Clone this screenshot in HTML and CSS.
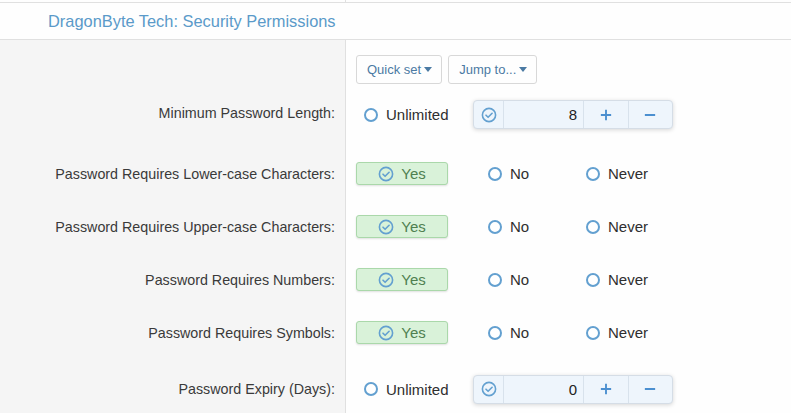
FILE: index.html
```html
<!DOCTYPE html>
<html lang="en">
<head>
    <meta charset="UTF-8">
    <meta name="viewport" content="width=device-width, initial-scale=1.0">
    <title>Security Permissions</title>
    <link rel="stylesheet" href="styles.css">
</head>
<body>
    <div class="top-strip">
        <div class="strip-left"></div>
        <div class="strip-right"></div>
    </div>
    <h2 class="block-header">DragonByte Tech: Security Permissions</h2>

    <div class="form">
        <div class="row row-tools">
            <div class="label"></div>
            <div class="value">
                <button class="menu-btn">Quick set <span class="caret"></span></button>
                <button class="menu-btn">Jump to... <span class="caret"></span></button>
            </div>
        </div>

        <div class="row row-first">
            <div class="label">Minimum Password Length:</div>
            <div class="value">
                <label class="choice choice-unlimited"><span class="radio"></span>Unlimited</label>
                <div class="spinner">
                    <span class="spin-check">
                        <svg viewBox="0 0 16 16"><circle cx="8" cy="8" r="6.6"/><path d="M5 8.2l2.1 2.1 4-4"/></svg>
                    </span>
                    <span class="spin-input">8</span>
                    <span class="spin-btn">
                        <svg viewBox="0 0 14 14"><path d="M7 1v12M1 7h12"/></svg>
                    </span>
                    <span class="spin-btn">
                        <svg viewBox="0 0 14 14"><path d="M1 7h12"/></svg>
                    </span>
                </div>
            </div>
        </div>

        <div class="row">
            <div class="label">Password Requires Lower-case Characters:</div>
            <div class="value">
                <span class="yes-btn">
                    <svg viewBox="0 0 16 16"><circle cx="8" cy="8" r="6.6"/><path d="M5 8.2l2.1 2.1 4-4"/></svg>
                    Yes
                </span>
                <label class="choice choice-no"><span class="radio"></span>No</label>
                <label class="choice"><span class="radio"></span>Never</label>
            </div>
        </div>

        <div class="row">
            <div class="label">Password Requires Upper-case Characters:</div>
            <div class="value">
                <span class="yes-btn">
                    <svg viewBox="0 0 16 16"><circle cx="8" cy="8" r="6.6"/><path d="M5 8.2l2.1 2.1 4-4"/></svg>
                    Yes
                </span>
                <label class="choice choice-no"><span class="radio"></span>No</label>
                <label class="choice"><span class="radio"></span>Never</label>
            </div>
        </div>

        <div class="row">
            <div class="label">Password Requires Numbers:</div>
            <div class="value">
                <span class="yes-btn">
                    <svg viewBox="0 0 16 16"><circle cx="8" cy="8" r="6.6"/><path d="M5 8.2l2.1 2.1 4-4"/></svg>
                    Yes
                </span>
                <label class="choice choice-no"><span class="radio"></span>No</label>
                <label class="choice"><span class="radio"></span>Never</label>
            </div>
        </div>

        <div class="row">
            <div class="label">Password Requires Symbols:</div>
            <div class="value">
                <span class="yes-btn">
                    <svg viewBox="0 0 16 16"><circle cx="8" cy="8" r="6.6"/><path d="M5 8.2l2.1 2.1 4-4"/></svg>
                    Yes
                </span>
                <label class="choice choice-no"><span class="radio"></span>No</label>
                <label class="choice"><span class="radio"></span>Never</label>
            </div>
        </div>

        <div class="row row-last">
            <div class="label">Password Expiry (Days):</div>
            <div class="value">
                <label class="choice choice-unlimited"><span class="radio"></span>Unlimited</label>
                <div class="spinner">
                    <span class="spin-check">
                        <svg viewBox="0 0 16 16"><circle cx="8" cy="8" r="6.6"/><path d="M5 8.2l2.1 2.1 4-4"/></svg>
                    </span>
                    <span class="spin-input">0</span>
                    <span class="spin-btn">
                        <svg viewBox="0 0 14 14"><path d="M7 1v12M1 7h12"/></svg>
                    </span>
                    <span class="spin-btn">
                        <svg viewBox="0 0 14 14"><path d="M1 7h12"/></svg>
                    </span>
                </div>
            </div>
        </div>
    </div>
</body>
</html>
```

FILE: styles.css
```css
:root {
    --border: #e0e0e0;
    --label-bg: #f5f5f5;
    --text: #3a3a3a;
    --blue: #5a9ac9;
    --icon-blue: #63a0d0;
}
* {
    box-sizing: border-box;
    margin: 0;
    padding: 0;
}
body {
    background-color: #fefefe;
    font-family: "Liberation Sans", Arial, sans-serif;
    font-size: 14.3px;
    color: var(--text);
    overflow: hidden;
}
.top-strip {
    display: flex;
    height: 3px;
    border-bottom: 1px solid var(--border);
}
.strip-left {
    width: 346px;
    border-right: 1px solid var(--border);
}
.block-header {
    height: 37px;
    padding: 0 48px;
    display: flex;
    align-items: center;
    font-size: 16.4px;
    font-weight: normal;
    color: var(--blue);
    border-bottom: 1px solid var(--border);
}
.row {
    display: flex;
    height: 53px;
}
.row-tools {
    height: 46px;
}
.row-first {
    height: 61px;
}
.row-last {
    height: 60px;
}
.label {
    width: 346px;
    flex-shrink: 0;
    background-color: var(--label-bg);
    border-right: 1px solid var(--border);
    padding-right: 10px;
    display: flex;
    align-items: center;
    justify-content: flex-end;
}
.row-first .label {
    padding-bottom: 8px;
}
.value {
    flex: 1;
    display: flex;
    align-items: center;
    padding-left: 10px;
    font-size: 15px;
}
.row-first .value {
    padding-bottom: 4px;
}
.row-tools .value {
    align-items: flex-start;
    padding-top: 15px;
}
.menu-btn {
    height: 29px;
    padding: 0 9px 0 10px;
    margin-right: 6px;
    border: 1px solid #d8d8d8;
    border-radius: 3px;
    background-color: #fefefe;
    color: #4b7aa3;
    font-family: inherit;
    font-size: 13px;
    display: flex;
    align-items: center;
    gap: 3px;
}
.caret {
    width: 0;
    height: 0;
    border-left: 4px solid transparent;
    border-right: 4px solid transparent;
    border-top: 5px solid #4b7aa3;
}
.choice {
    display: flex;
    align-items: center;
    gap: 8px;
    color: #2f2f2f;
}
.choice-unlimited {
    padding-left: 8px;
    width: 117px;
}
.choice-no {
    margin-left: 40px;
    width: 98px;
}
.radio {
    width: 14px;
    height: 14px;
    border: 2px solid var(--icon-blue);
    border-radius: 50%;
    background-color: #fff;
}
.yes-btn {
    width: 92px;
    height: 23px;
    display: flex;
    align-items: center;
    justify-content: center;
    gap: 7px;
    background-color: #d9f2d9;
    border: 1px solid #aad8aa;
    border-radius: 3px;
    box-shadow: 0 1px 2px rgba(0, 0, 0, 0.12);
    color: #4f8050;
}
.yes-btn svg,
.spin-check svg {
    width: 16px;
    height: 16px;
    fill: none;
    stroke: var(--icon-blue);
    stroke-width: 1.6;
    stroke-linecap: round;
    stroke-linejoin: round;
}
.spinner {
    display: flex;
    height: 29px;
    width: 200px;
    background-color: #eef5fc;
    border: 1px solid #d5dde6;
    border-radius: 4px;
    box-shadow: 0 1px 4px rgba(0, 0, 0, 0.16);
    overflow: hidden;
}
.spinner > span {
    display: flex;
    align-items: center;
    justify-content: center;
    border-left: 1px solid #d8e2ec;
}
.spinner > span:first-child {
    border-left: none;
}
.spin-check {
    width: 29px;
}
.spin-input {
    width: 80px;
    justify-content: flex-end !important;
    padding-right: 6px;
    color: #222;
    font-size: 15px;
}
.spin-btn {
    flex: 1;
}
.spin-btn svg {
    width: 12px;
    height: 12px;
    stroke: #4b8fd0;
    stroke-width: 2.2;
}
```
